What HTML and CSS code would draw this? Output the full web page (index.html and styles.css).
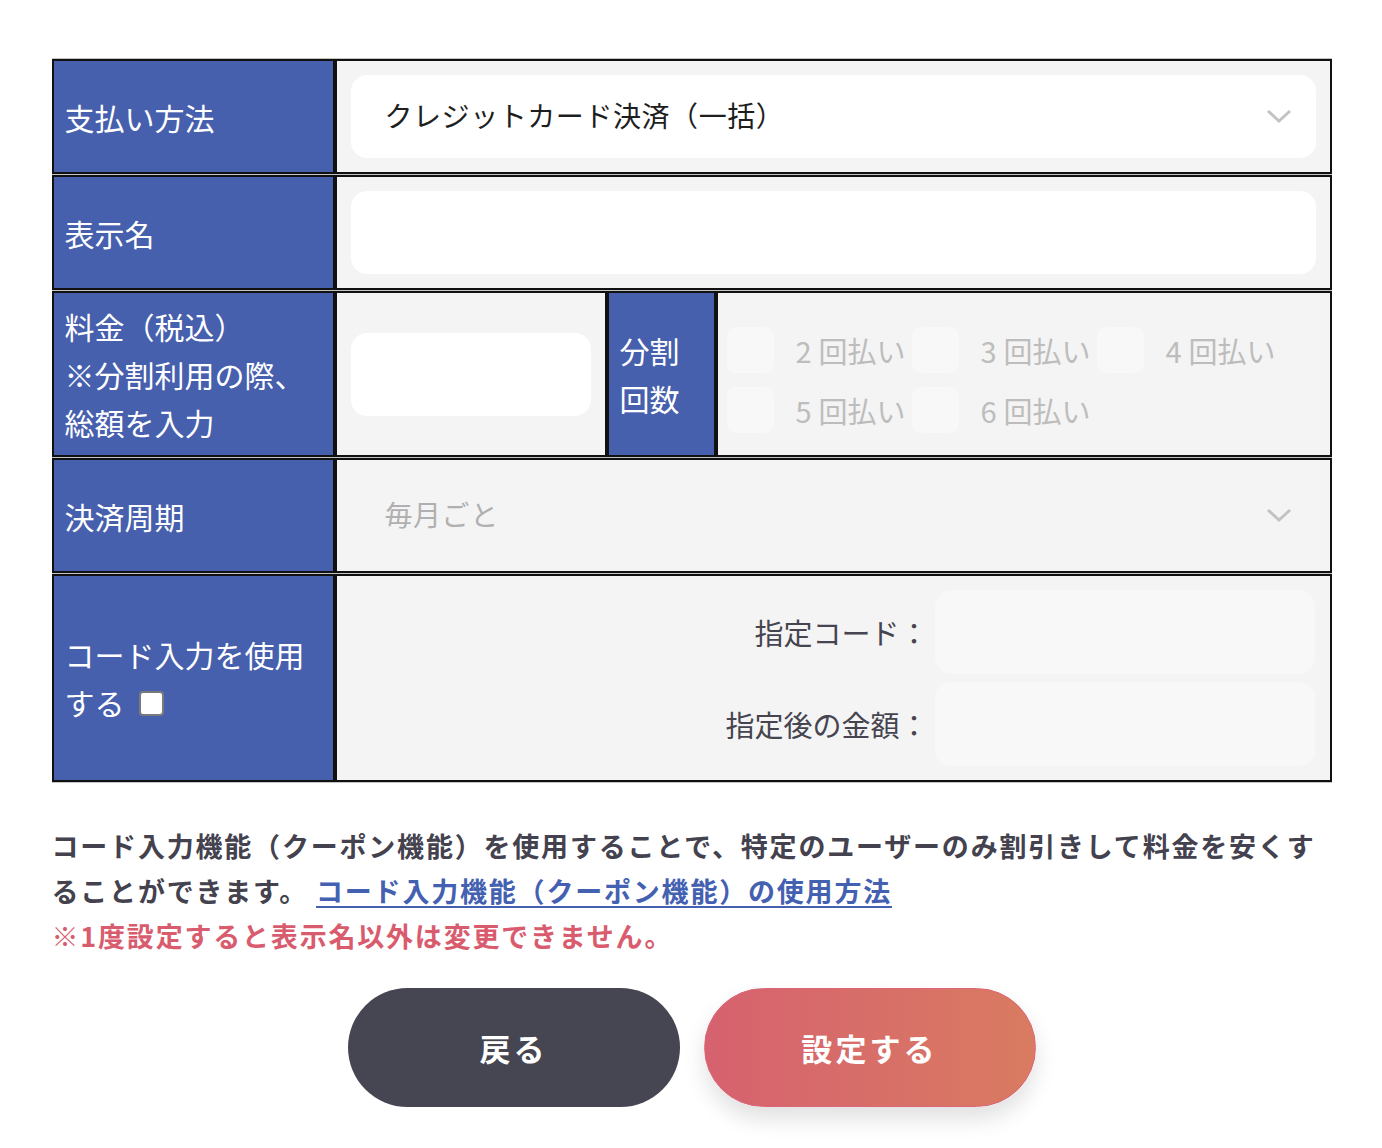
FILE: index.html
```html
<!DOCTYPE html>
<html lang="ja">
<head>
<meta charset="utf-8">
<title>決済設定</title>
<link rel="stylesheet" href="styles.css">
</head>
<body>
<div class="page">
  <table class="form-table">
    <colgroup>
      <col class="col-head">
      <col class="col-amount">
      <col class="col-sub">
      <col class="col-rest">
    </colgroup>
    <tr>
      <th>支払い方法</th>
      <td colspan="3">
        <div class="select">
          <span class="select-text">クレジットカード決済（一括）</span>
          <svg class="chev" width="28" height="17" viewBox="0 0 28 17"><polyline points="3,3 14,13 25,3" fill="none" stroke="#c2c2c2" stroke-width="3"/></svg>
        </div>
      </td>
    </tr>
    <tr>
      <th>表示名</th>
      <td colspan="3"><div class="field"></div></td>
    </tr>
    <tr>
      <th>料金（税込）<br>※分割利用の際、<br>総額を入力</th>
      <td><div class="field"></div></td>
      <th class="sub-head">分割<br>回数</th>
      <td class="opts-cell">
        <div class="opts">
          <label class="opt"><span class="box"></span><span class="opt-text"><span class="num">2</span>回払い</span></label>
          <label class="opt"><span class="box"></span><span class="opt-text"><span class="num">3</span>回払い</span></label>
          <label class="opt"><span class="box"></span><span class="opt-text"><span class="num">4</span>回払い</span></label>
          <label class="opt"><span class="box"></span><span class="opt-text"><span class="num">5</span>回払い</span></label>
          <label class="opt"><span class="box"></span><span class="opt-text"><span class="num">6</span>回払い</span></label>
        </div>
      </td>
    </tr>
    <tr>
      <th>決済周期</th>
      <td colspan="3">
        <div class="select select-disabled">
          <span class="select-text">毎月ごと</span>
          <svg class="chev" width="28" height="17" viewBox="0 0 28 17"><polyline points="3,3 14,13 25,3" fill="none" stroke="#c2c2c2" stroke-width="3"/></svg>
        </div>
      </td>
    </tr>
    <tr>
      <th>コード入力を使用<br>する <span class="th-check"></span></th>
      <td colspan="3" class="code-cell">
        <div class="code-grid">
          <span class="code-label">指定コード：</span>
          <div class="field field-soft"></div>
          <span class="code-label">指定後の金額：</span>
          <div class="field field-soft"></div>
        </div>
      </td>
    </tr>
  </table>

  <p class="note">コード入力機能（クーポン機能）を使用することで、特定のユーザーのみ割引きして料金を安くすることができます。<a class="note-link" href="#">コード入力機能（クーポン機能）の使用方法</a><br><span class="note-warn">※1度設定すると表示名以外は変更できません。</span></p>

  <div class="actions">
    <button class="btn btn-back" type="button">戻る</button>
    <button class="btn btn-submit" type="button">設定する</button>
  </div>
</div>
</body>
</html>
```

FILE: styles.css
```css
html, body {
  margin: 0;
  padding: 0;
  background: #ffffff;
}

body {
  font-family: "Noto Sans CJK JP", "Noto Sans", sans-serif;
  color: #222;
}

.page {
  width: 1280px;
  margin: 58px auto 0;
  padding-left: 1px;
}

.form-table {
  width: 1280px;
  table-layout: fixed;
  border-collapse: separate;
  border-spacing: 0 1px;
  background: #c4c4c4;
}

.col-head { width: 283px; }
.col-amount { width: 272px; }
.col-sub { width: 109px; }
.col-rest { width: 616px; }

.form-table th {
  background: #4660ad;
  color: #ffffff;
  font-weight: normal;
  text-align: left;
  border: 2px solid #111;
  padding: 9px 11px;
  font-size: 30px;
  line-height: 48px;
  vertical-align: middle;
}

.form-table td {
  background: #f4f4f4;
  border: 2px solid #111;
  padding: 14px;
  vertical-align: middle;
}

.select {
  height: 83px;
  background: #ffffff;
  border-radius: 16px;
  display: flex;
  align-items: center;
  justify-content: space-between;
  padding: 0 23px 0 34px;
  box-sizing: border-box;
}

.select-text {
  font-size: 28px;
  color: #1e1e1e;
  letter-spacing: 0.02em;
  margin-top: -3px;
}

.select-disabled {
  background: #f4f4f4;
}

.select-disabled .select-text {
  color: #b0b0b0;
}

.field {
  height: 83px;
  background: #ffffff;
  border-radius: 16px;
}

.field-soft {
  background: #f8f8f8;
  height: 84px;
}

.sub-head.sub-head {
  padding: 0 11px;
}

.form-table td.opts-cell {
  padding: 12px 0 0 9px;
}

.opts {
  display: flex;
  flex-wrap: wrap;
  row-gap: 14px;
}

.opt {
  width: 185px;
  display: flex;
  align-items: center;
}

.box {
  width: 47px;
  height: 46px;
  border-radius: 9px;
  background: #f8f8f8;
  margin-right: 22px;
  flex: none;
}

.opt-text {
  font-size: 29px;
  color: #bdbdbd;
  white-space: nowrap;
}

.num {
  margin-right: 7px;
}

.th-check {
  display: inline-block;
  width: 21px;
  height: 21px;
  background: #fff;
  border: 2px solid #7a7a7a;
  border-radius: 4px;
  vertical-align: -1px;
  margin-left: 8px;
}

.form-table td.code-cell {
  padding: 14px 15px 14px 14px;
}

.code-grid {
  display: grid;
  grid-template-columns: 1fr 380px;
  column-gap: 6px;
  row-gap: 8px;
  align-items: center;
}

.code-label {
  text-align: right;
  font-size: 29px;
  color: #45444f;
}

.note {
  margin: 40px 0 0;
  font-size: 27px;
  font-weight: bold;
  line-height: 45px;
  letter-spacing: 1.8px;
  color: #43424e;
}

.note-link {
  color: #4461b1;
  margin-left: 8px;
  text-decoration: underline;
  text-decoration-thickness: 2px;
  text-underline-offset: 4px;
}

.note-warn {
  color: #d95c6e;
}

.actions {
  display: flex;
  justify-content: center;
  gap: 24px;
  margin-top: 30px;
  padding-bottom: 40px;
}

.btn {
  width: 332px;
  height: 119px;
  border: none;
  border-radius: 60px;
  color: #ffffff;
  font-family: "Noto Sans CJK JP", sans-serif;
  font-size: 31px;
  font-weight: bold;
  letter-spacing: 0.1em;
  display: flex;
  align-items: center;
  justify-content: center;
  padding: 0;
}

.btn-back {
  background: #464552;
}

.btn-submit {
  background: linear-gradient(90deg, #d6616f 0%, #d97b61 100%);
  box-shadow: 0 12px 22px rgba(0, 0, 0, 0.12);
  border: 1px solid #dc6678;
}
```
